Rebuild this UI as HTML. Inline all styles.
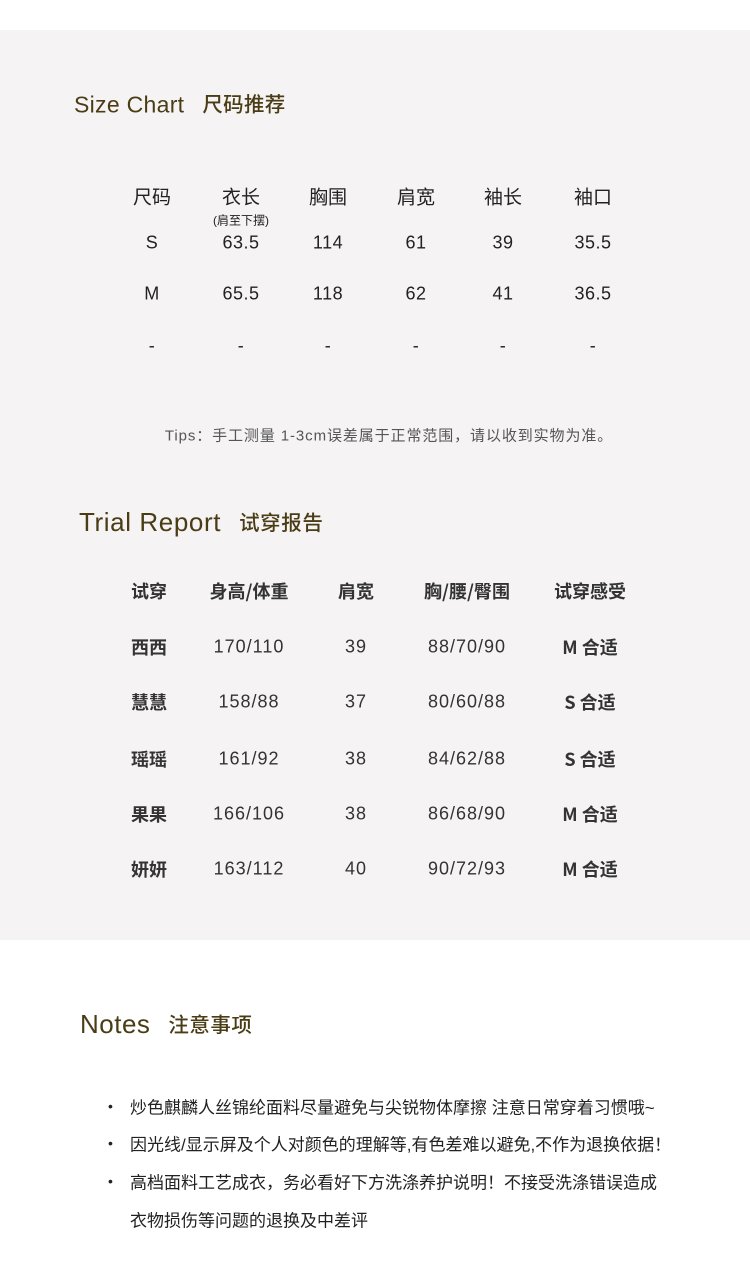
<!DOCTYPE html><html><head><meta charset="utf-8"><style>
body{margin:0;width:750px;height:1269px;position:relative;background:#fff;font-family:"Liberation Sans","Noto Sans CJK SC",sans-serif;color:#222;overflow:hidden}
.bg{position:absolute;left:0;top:30px;width:750px;height:910px;background:#f5f3f4}
.c{position:absolute;transform:translate(-50%,-50%);white-space:nowrap}
.t{position:absolute;white-space:nowrap;color:#4a3c14;transform:translateY(-50%)}
.t b{font-family:"Noto Sans CJK SC",sans-serif;font-weight:500;font-size:20.5px;margin-left:18px;vertical-align:1px}
.h{font-size:19px;color:#222}
.n{font-size:18px;color:#222;letter-spacing:.5px}
.r{font-size:18px;color:#333;font-weight:bold;font-family:"Noto Sans CJK SC",sans-serif}
.v{font-size:18px;color:#333;letter-spacing:1px}
.note{position:absolute;left:130px;font-size:17px;color:#222;transform:translateY(-50%);white-space:nowrap}
.dot{position:absolute;left:108px;font-size:14px;transform:translateY(-50%)}
</style></head><body>
<div class="bg"></div>
<div class="t" style="left:74px;top:103px;font-size:23px;letter-spacing:.3px">Size Chart<b>尺码推荐</b></div>
<div class="c h" style="left:152px;top:196px">尺码</div>
<div class="c h" style="left:241px;top:196px">衣长</div>
<div class="c" style="left:241px;top:220px;font-size:12px">(肩至下摆)</div>
<div class="c h" style="left:328px;top:196px">胸围</div>
<div class="c h" style="left:416px;top:196px">肩宽</div>
<div class="c h" style="left:503px;top:196px">袖长</div>
<div class="c h" style="left:593px;top:196px">袖口</div>
<div class="c n" style="left:152px;top:243px">S</div><div class="c n" style="left:241px;top:243px">63.5</div><div class="c n" style="left:328px;top:243px">114</div><div class="c n" style="left:416px;top:243px">61</div><div class="c n" style="left:503px;top:243px">39</div><div class="c n" style="left:593px;top:243px">35.5</div>
<div class="c n" style="left:152px;top:294px">M</div><div class="c n" style="left:241px;top:294px">65.5</div><div class="c n" style="left:328px;top:294px">118</div><div class="c n" style="left:416px;top:294px">62</div><div class="c n" style="left:503px;top:294px">41</div><div class="c n" style="left:593px;top:294px">36.5</div>
<div class="c n" style="left:152px;top:346px">-</div><div class="c n" style="left:241px;top:346px">-</div><div class="c n" style="left:328px;top:346px">-</div><div class="c n" style="left:416px;top:346px">-</div><div class="c n" style="left:503px;top:346px">-</div><div class="c n" style="left:593px;top:346px">-</div>
<div class="c" style="left:389px;top:435px;font-size:15px;color:#555;letter-spacing:.9px">Tips：手工测量 1-3cm误差属于正常范围，请以收到实物为准。</div>
<div class="t" style="left:79px;top:522px;font-size:26px;letter-spacing:.6px">Trial Report<b>试穿报告</b></div>
<div class="c r" style="left:149px;top:591px">试穿</div><div class="c r" style="left:249px;top:591px">身高/体重</div><div class="c r" style="left:356px;top:591px">肩宽</div><div class="c r" style="left:467px;top:591px">胸/腰/臀围</div><div class="c r" style="left:590px;top:591px">试穿感受</div>
<div class="c r" style="left:149px;top:647px">西西</div><div class="c v" style="left:249px;top:647px">170/110</div><div class="c v" style="left:356px;top:647px">39</div><div class="c v" style="left:467px;top:647px">88/70/90</div><div class="c r" style="left:590px;top:647px">M 合适</div>
<div class="c r" style="left:149px;top:702px">慧慧</div><div class="c v" style="left:249px;top:702px">158/88</div><div class="c v" style="left:356px;top:702px">37</div><div class="c v" style="left:467px;top:702px">80/60/88</div><div class="c r" style="left:590px;top:702px">S 合适</div>
<div class="c r" style="left:149px;top:759px">瑶瑶</div><div class="c v" style="left:249px;top:759px">161/92</div><div class="c v" style="left:356px;top:759px">38</div><div class="c v" style="left:467px;top:759px">84/62/88</div><div class="c r" style="left:590px;top:759px">S 合适</div>
<div class="c r" style="left:149px;top:814px">果果</div><div class="c v" style="left:249px;top:814px">166/106</div><div class="c v" style="left:356px;top:814px">38</div><div class="c v" style="left:467px;top:814px">86/68/90</div><div class="c r" style="left:590px;top:814px">M 合适</div>
<div class="c r" style="left:149px;top:869px">妍妍</div><div class="c v" style="left:249px;top:869px">163/112</div><div class="c v" style="left:356px;top:869px">40</div><div class="c v" style="left:467px;top:869px">90/72/93</div><div class="c r" style="left:590px;top:869px">M 合适</div>
<div class="t" style="left:80px;top:1024px;font-size:26px;letter-spacing:.5px">Notes<b>注意事项</b></div>
<div class="dot" style="top:1106px">•</div><div class="note" style="top:1106px">炒色麒麟人丝锦纶面料尽量避免与尖锐物体摩擦 注意日常穿着习惯哦~</div>
<div class="dot" style="top:1143px">•</div><div class="note" style="top:1143px">因光线/显示屏及个人对颜色的理解等,有色差难以避免,不作为退换依据！</div>
<div class="dot" style="top:1181px">•</div><div class="note" style="top:1181px">高档面料工艺成衣，务必看好下方洗涤养护说明！不接受洗涤错误造成</div>
<div class="note" style="top:1219px">衣物损伤等问题的退换及中差评</div>
</body></html>
